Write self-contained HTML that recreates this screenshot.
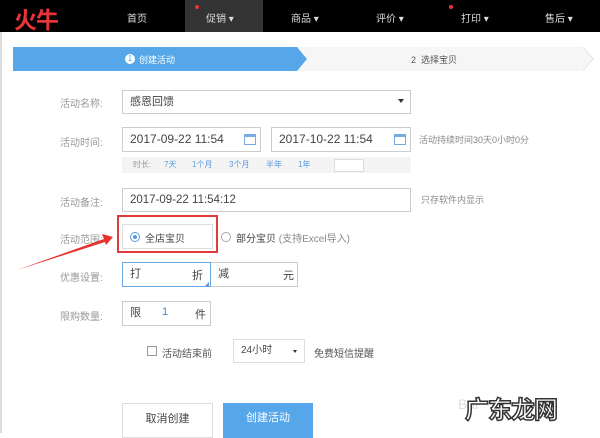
<!DOCTYPE html>
<html><head><meta charset="utf-8"><style>
*{box-sizing:border-box;margin:0;padding:0}
body{width:600px;height:433px;overflow:hidden;background:#fff;font-family:"Liberation Sans","Noto Sans CJK SC",sans-serif;font-size:10px;color:#666;position:relative}
.a{position:absolute}
.nav{left:0;top:0;width:600px;height:32px;background:#000}
.nav span{position:absolute;top:10px;color:#ddd;font-size:10px}
.box{position:absolute;border:1px solid #ccc;background:#fff;color:#444;font-size:11px;line-height:22px;padding-left:7px}
.lbl{position:absolute;left:60px;color:#999;font-size:10px}
.cal{position:absolute;width:12px;height:11px;border:1px solid #7aa8e0;border-top-width:3px}
.d{position:absolute;top:159px;font-size:8px;color:#5a9be0}
</style></head><body>
<div class="a nav"></div>
<div class="a" style="left:14px;top:1px;color:#e8333a;font-size:23px;font-weight:bold;letter-spacing:-1px">火牛</div>
<div class="a" style="left:185px;top:0;width:78px;height:32px;background:#333"></div>
<div class="nav a" style="background:none">
<span style="left:127px">首页</span>
<span style="left:206px">促销 ▾</span>
<span style="left:291px">商品 ▾</span>
<span style="left:376px">评价 ▾</span>
<span style="left:461px">打印 ▾</span>
<span style="left:545px">售后 ▾</span>
</div>
<div class="a" style="left:195px;top:5px;width:4px;height:4px;border-radius:50%;background:#e33"></div>
<div class="a" style="left:449px;top:5px;width:4px;height:4px;border-radius:50%;background:#e33"></div>
<div class="a" style="left:0;top:32px;width:2px;height:401px;background:#ddd"></div>
<svg class="a" style="left:13px;top:47px" width="587" height="24">
<polygon points="0,0 570,0 580,12 570,24 0,24" fill="#f6f6f6"/>
<polyline points="570,0 580,12 570,24" fill="none" stroke="#e5e5e5"/>
<polygon points="0,0 284,0 294,12 284,24 0,24" fill="#56a6ea"/>
</svg>
<div class="a" style="left:125px;top:54px;width:10px;height:10px;border-radius:50%;background:#fff;color:#56a6ea;font-size:8px;text-align:center;line-height:10px">1</div>
<div class="a" style="left:139px;top:53px;color:#fff;font-size:9px">创建活动</div>
<div class="a" style="left:411px;top:53px;color:#555;font-size:9px">2&nbsp; 选择宝贝</div>

<div class="lbl" style="top:95px">活动名称:</div>
<div class="box" style="left:122px;top:90px;width:289px;height:24px">感恩回馈</div>
<div class="a" style="left:398px;top:99px;border:3px solid transparent;border-top:4px solid #333"></div>

<div class="lbl" style="top:134px">活动时间:</div>
<div class="box" style="left:122px;top:127px;width:139px;height:25px;line-height:23px;font-size:12px">2017-09-22 11:54</div>
<div class="cal" style="left:244px;top:134px"></div>
<div class="box" style="left:271px;top:127px;width:140px;height:25px;line-height:23px;font-size:12px">2017-10-22 11:54</div>
<div class="cal" style="left:394px;top:134px"></div>
<div class="a" style="left:419px;top:133px;font-size:9px;color:#888">活动持续时间30天0小时0分</div>
<div class="a" style="left:122px;top:157px;width:289px;height:16px;background:#f4f4f4"></div>
<div class="a" style="left:133px;top:159px;font-size:8px;color:#999">时长:</div>
<div class="d" style="left:164px">7天</div>
<div class="d" style="left:192px">1个月</div>
<div class="d" style="left:229px">3个月</div>
<div class="d" style="left:266px">半年</div>
<div class="d" style="left:298px">1年</div>
<div class="a" style="left:334px;top:159px;width:30px;height:13px;background:#fff;border:1px solid #ddd"></div>

<div class="lbl" style="top:194px">活动备注:</div>
<div class="box" style="left:122px;top:188px;width:289px;height:24px;font-size:11.5px">2017-09-22 11:54:12</div>
<div class="a" style="left:421px;top:193px;font-size:9px;color:#888">只存软件内显示</div>

<div class="lbl" style="top:231px">活动范围:</div>
<div class="a" style="left:117px;top:215px;width:101px;height:38px;border:2px solid #e03a3a"></div>
<div class="a" style="left:122px;top:224px;width:91px;height:25px;border:1px solid #ddd"></div>
<div class="a" style="left:130px;top:232px;width:10px;height:10px;border-radius:50%;border:1px solid #5a9be0"></div>
<div class="a" style="left:133px;top:235px;width:4px;height:4px;border-radius:50%;background:#5a9be0"></div>
<div class="a" style="left:145px;top:230px;font-size:10px;color:#444">全店宝贝</div>
<div class="a" style="left:221px;top:232px;width:10px;height:10px;border-radius:50%;border:1px solid #aaa"></div>
<div class="a" style="left:236px;top:230px;font-size:10px;color:#444">部分宝贝 <span style="color:#888">(支持Excel导入)</span></div>
<svg class="a" style="left:0;top:225px" width="130" height="60"><polygon points="17,45 104,14 102,9 113,12 106,20 105,17" fill="#e8302e"/></svg>

<div class="lbl" style="top:269px">优惠设置:</div>
<div class="box" style="left:122px;top:262px;width:89px;height:25px;border-color:#6aa8e6">打</div>
<div class="a" style="left:192px;top:267px;font-size:11px;color:#444">折</div>
<div class="a" style="left:205px;top:282px;border:2.5px solid transparent;border-right-color:#5a9be0;border-bottom-color:#5a9be0"></div>
<div class="box" style="left:211px;top:262px;width:87px;height:25px;border-left:none">减</div>
<div class="a" style="left:283px;top:267px;font-size:11px;color:#444">元</div>

<div class="lbl" style="top:308px">限购数量:</div>
<div class="box" style="left:122px;top:301px;width:89px;height:25px">限</div>
<div class="a" style="left:162px;top:306px;font-size:11px;color:#3a86d8">1</div>
<div class="a" style="left:195px;top:306px;font-size:11px;color:#444">件</div>

<div class="a" style="left:147px;top:346px;width:10px;height:10px;border:1px solid #999;background:#fff"></div>
<div class="a" style="left:162px;top:345px;font-size:10px;color:#555">活动结束前</div>
<div class="box" style="left:233px;top:339px;width:72px;height:24px;border-color:#ddd;font-size:10px">24小时</div>
<div class="a" style="left:293px;top:350px;border:2.5px solid transparent;border-top:3px solid #333"></div>
<div class="a" style="left:314px;top:345px;font-size:10px;color:#555">免费短信提醒</div>

<div class="a" style="left:122px;top:403px;width:91px;height:35px;border:1px solid #ddd;background:#fff;color:#444;font-size:11px;text-align:center;line-height:30px">取消创建</div>
<div class="a" style="left:223px;top:403px;width:90px;height:35px;background:#56a6ea;color:#fff;font-size:11px;text-align:center;line-height:30px">创建活动</div>

<div class="a" style="left:458px;top:396px;font-size:14px;color:#ddd">Bai</div>
<div class="a" style="left:465px;top:390px;font-size:24px;font-weight:bold;color:#fff;-webkit-text-stroke:1.5px #333;letter-spacing:-1px">广东龙网</div>
</body></html>
